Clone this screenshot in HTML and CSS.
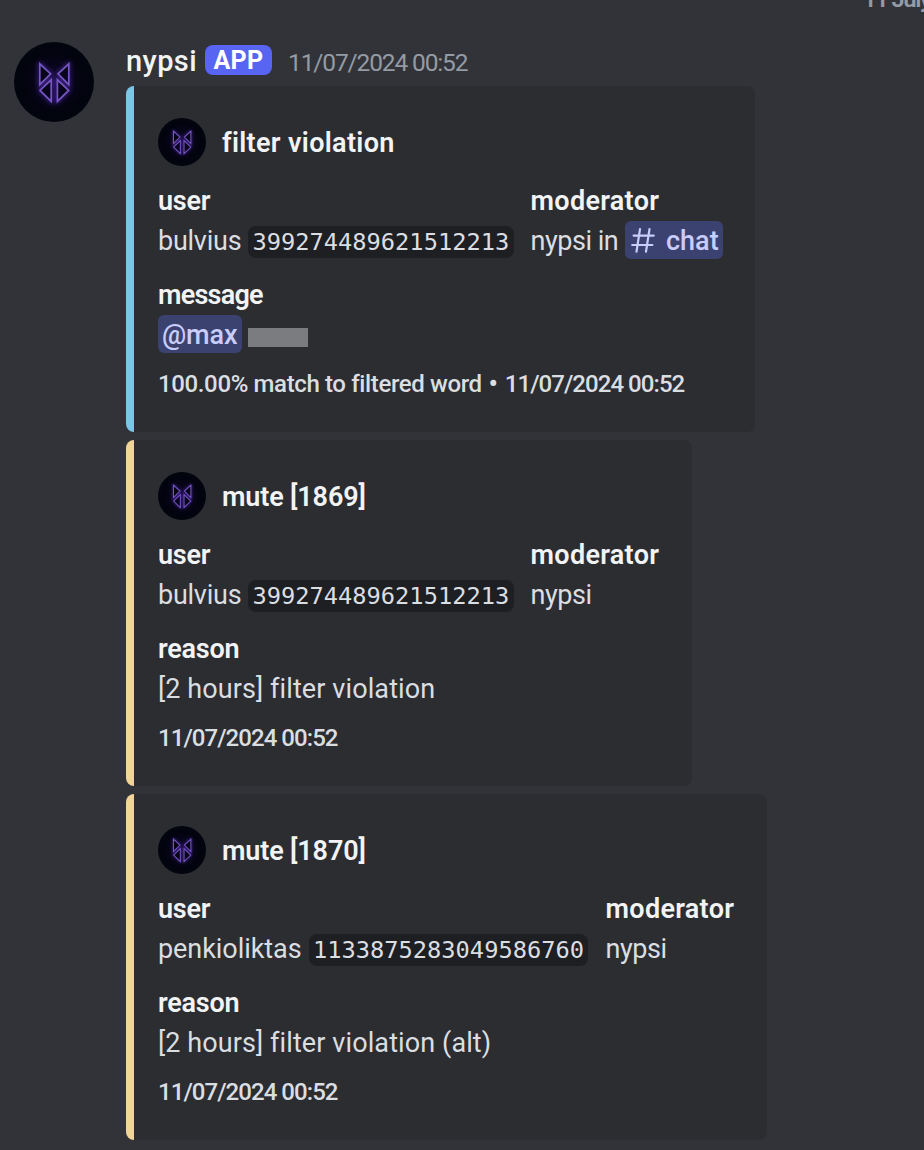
FILE: index.html
```
<!DOCTYPE html>
<html lang="en">
<head>
<meta charset="utf-8">
<title>nypsi</title>
<link rel="stylesheet" href="styles.css">
</head>
<body>
<svg class="defs" width="0" height="0">
  <defs>
    <radialGradient id="halo"><stop offset="0" stop-color="#130b34"/><stop offset=".45" stop-color="#07051a"/><stop offset=".75" stop-color="#02030e"/><stop offset="1" stop-color="#02040e"/></radialGradient>
    <filter id="glow" x="-40%" y="-40%" width="180%" height="180%"><feGaussianBlur stdDeviation="2.4"/></filter>
    <symbol id="logo" viewBox="0 0 80 80">
      <circle cx="40" cy="40" r="40" fill="url(#halo)"/>
      <path d="M25.8 21.8 36.6 31.8 25.8 42.6zM54.8 21.8 44 31.8 54.8 42.6zM26 48.4 37.2 37.8V59.4zM54.6 48.4 43.4 37.8V59.4z" fill="none" stroke="#4a289c" stroke-width="2.6" filter="url(#glow)"/>
      <path d="M25.8 21.8 36.6 31.8 25.8 42.6zM54.8 21.8 44 31.8 54.8 42.6zM26 48.4 37.2 37.8V59.4zM54.6 48.4 43.4 37.8V59.4z" fill="#08051a" stroke="#7656c2" stroke-width="1.7"/>
    </symbol>
  </defs>
</svg>
<div class="divider"><span>11 July</span></div>
<main class="message">
  <svg class="avatar"><use href="#logo"/></svg>
  <div class="body">
    <header class="head">
      <span class="name">nypsi</span>
      <span class="tag">APP</span>
      <time class="time">11/07/2024 00:52</time>
    </header>
    <article class="embed blue">
      <div class="author"><svg class="icon"><use href="#logo"/></svg><span class="title-wide">filter violation</span></div>
      <div class="row">
        <section><h3 class="t-user">user</h3><p><span class="t-bulvius">bulvius</span><code>399274489621512213</code></p></section>
        <section><h3 class="t-mod">moderator</h3><p><span class="t-nypsi">nypsi in</span><span class="mention channel"><svg class="hash" viewBox="0 0 24 25"><path d="M9 1.2 5.5 23.6M18.5 1.2 15 23.6M2.6 7.6H22.8M1.2 17H21.4" fill="none" stroke="#c9cdfb" stroke-width="2.2" stroke-linecap="round"/></svg><span class="label">chat</span></span></p></section>
      </div>
      <section class="block"><h3 class="t-message">message</h3><p><span class="mention user"><span class="label">@max</span></span><span class="redacted"></span></p></section>
      <footer><span class="t-foot">100.00% match to filtered word</span><span class="dot">•</span><time>11/07/2024 00:52</time></footer>
    </article>
    <article class="embed gold second">
      <div class="author"><svg class="icon"><use href="#logo"/></svg><span class="title">mute [1869]</span></div>
      <div class="row">
        <section><h3 class="t-user">user</h3><p><span class="t-bulvius">bulvius</span><code>399274489621512213</code></p></section>
        <section><h3 class="t-mod">moderator</h3><p><span class="t-nypsi">nypsi</span></p></section>
      </div>
      <section class="block"><h3 class="t-user">reason</h3><p><span class="t-reason">[2 hours] filter violation</span></p></section>
      <footer><time>11/07/2024 00:52</time></footer>
    </article>
    <article class="embed gold third">
      <div class="author"><svg class="icon"><use href="#logo"/></svg><span class="title">mute [1870]</span></div>
      <div class="row">
        <section><h3 class="t-user">user</h3><p><span class="t-penk">penkioliktas</span><code>1133875283049586760</code></p></section>
        <section><h3 class="t-mod">moderator</h3><p><span class="t-nypsi">nypsi</span></p></section>
      </div>
      <section class="block"><h3 class="t-user">reason</h3><p><span class="t-reason">[2 hours] filter violation (alt)</span></p></section>
      <footer><time>11/07/2024 00:52</time></footer>
    </article>
  </div>
</main>
</body>
</html>
```
FILE: styles.css
```
* { box-sizing: border-box; }
body { margin: 0; height: 1150px; overflow: hidden; background: #313338; color: #dbdee1; font: 400 27px/36px Roboto, "Noto Sans", sans-serif; }
.defs { position: absolute; }
.divider { height: 42px; padding-left: 863px; white-space: nowrap; overflow: hidden; color: #949ba4; font-size: 24px; font-weight: 600; line-height: 30px; letter-spacing: -1.6px; }
.divider span { display: block; margin-top: -16px; }
.message { display: flex; gap: 32px; padding-left: 14px; }
.avatar { width: 80px; height: 80px; flex: none; }
.body { display: flex; flex-direction: column; align-items: flex-start; gap: 8px; }
.head { display: flex; align-items: center; height: 36px; line-height: 36px; color: #f2f3f5; }
.name { width: 79px; padding-top: 2px; font-size: 29px; font-weight: 500; letter-spacing: .4px; }
.tag { width: 67px; height: 30px; border-radius: 8px; background: #5865f2; color: #fff; font-size: 25px; line-height: 32px; font-weight: 700; text-align: center; letter-spacing: .4px; margin-right: 16px; }
time { letter-spacing: -.95px; }
.time { font-size: 24.5px; font-weight: 400; color: #949ba4; line-height: 40px; padding-top: 5px; letter-spacing: -1.13px; }
.embed { height: 346px; width: 629px; padding: 32px 0 0 24px; border-left: 8px solid; border-radius: 8px; background: #2b2d31; }
.second { width: 566px; }
.third { width: 641px; }
.blue { border-left-color: #7cc5e7; }
.gold { border-left-color: #f0d49c; }
.author { display: flex; align-items: center; gap: 16px; height: 48px; font-weight: 600; color: #f2f3f5; }
.icon { width: 48px; height: 48px; }
.title { letter-spacing: -.15px; padding-top: 2px; }
.title-wide { letter-spacing: .33px; padding-top: 2px; }
.row { display: grid; grid-template-columns: 372.6px auto; margin-top: 17px; }
.third .row { grid-template-columns: 447.6px auto; }
h3 { margin: 0; font-size: 27px; height: 38px; line-height: 36px; font-weight: 600; color: #f2f3f5; }
p { display: flex; align-items: center; margin: 0; height: 38px; line-height: 38px; white-space: nowrap; }
.block { margin-top: 18px; }
.t-user { letter-spacing: -.25px; }
.t-mod { letter-spacing: .3px; }
.t-message { letter-spacing: -.75px; }
.t-bulvius, .t-penk, .t-nypsi, .t-reason, .label { padding-top: 2px; }
.t-bulvius { width: 90px; letter-spacing: -.25px; }
.t-penk { width: 150.5px; letter-spacing: -.06px; }
.t-nypsi { width: 94.4px; letter-spacing: -.5px; }
.t-reason { letter-spacing: .1px; }
code { height: 32px; margin-top: 4px; padding: 0 4.5px; border-radius: 8px; background: #1e1f22; font: 23.7px/32px "DejaVu Sans Mono", monospace; }
.mention { display: flex; align-items: center; height: 38px; border-radius: 6px; background: #3c4270; color: #c9cdfb; font-weight: 500; }
.channel { width: 98px; padding-left: 6px; }
.hash { width: 24px; height: 25px; margin-right: 11px; }
.user { width: 84px; padding-left: 4px; letter-spacing: -.1px; }
.redacted { width: 60px; height: 19px; margin: 6px 0 0 6px; background: #7b7c80; }
footer { display: flex; margin-top: 19px; line-height: 24px; font-size: 24px; font-weight: 500; }
.t-foot { letter-spacing: -.37px; }
.dot { width: 23px; text-align: center; font-size: 27px; }
```
